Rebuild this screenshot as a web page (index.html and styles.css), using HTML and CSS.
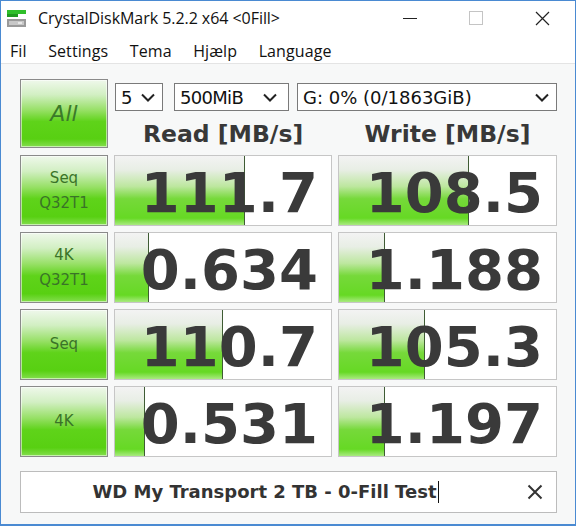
FILE: index.html
```html
<!DOCTYPE html>
<html lang="da">
<head>
<meta charset="utf-8">
<title>CrystalDiskMark</title>
<link rel="stylesheet" href="styles.css">
</head>
<body>
<div class="window">
  <div class="titlebar">
    <svg class="app-icon" width="22" height="22" viewBox="0 0 22 22">
      <rect x="1" y="2" width="19" height="4" fill="#2fbf2a"/>
      <rect x="1" y="6" width="11" height="3" fill="#1f9a1f"/>
      <rect x="1" y="11" width="19" height="8" fill="#9a9a9a"/>
      <rect x="3" y="13" width="15" height="4" fill="#c8c8c8"/>
      <rect x="12" y="14" width="4" height="2" fill="#e8e8e8"/>
    </svg>
    <span class="title">CrystalDiskMark 5.2.2 x64 &lt;0Fill&gt;</span>
    <div class="controls">
      <span class="ctrl"><svg width="14" height="14" viewBox="0 0 14 14"><line x1="0" y1="7.5" x2="14" y2="7.5" stroke="#222" stroke-width="1"/></svg></span>
      <span class="ctrl"><svg width="14" height="14" viewBox="0 0 14 14"><rect x="0.5" y="0.5" width="13" height="13" fill="none" stroke="#c4c4c4" stroke-width="1"/></svg></span>
      <span class="ctrl"><svg width="15" height="15" viewBox="0 0 15 15"><path d="M1 1L14 14M14 1L1 14" stroke="#222" stroke-width="1.2" fill="none"/></svg></span>
    </div>
  </div>
  <div class="menubar">
    <span class="menu-item">Fil</span>
    <span class="menu-item">Settings</span>
    <span class="menu-item">Tema</span>
    <span class="menu-item">Hjælp</span>
    <span class="menu-item">Language</span>
  </div>
  <div class="content">
    <div class="grid">
      <div class="btn btn-all">All</div>
      <div class="top-right">
        <div class="toolbar">
          <div class="select sel-count"><span>5</span><svg class="chev" width="14" height="9" viewBox="0 0 14 9"><path d="M1 1.5L7 7.5L13 1.5" fill="none" stroke="#222" stroke-width="2"/></svg></div>
          <div class="select sel-size"><span>500MiB</span><svg class="chev" width="14" height="9" viewBox="0 0 14 9"><path d="M1 1.5L7 7.5L13 1.5" fill="none" stroke="#222" stroke-width="2"/></svg></div>
          <div class="select sel-drive"><span>G: 0% (0/1863GiB)</span><svg class="chev" width="14" height="9" viewBox="0 0 14 9"><path d="M1 1.5L7 7.5L13 1.5" fill="none" stroke="#222" stroke-width="2"/></svg></div>
        </div>
        <div class="heads">
          <div class="head">Read [MB/s]</div>
          <div class="head">Write [MB/s]</div>
        </div>
      </div>

      <div class="btn btn-label"><span>Seq</span><span>Q32T1</span></div>
      <div class="cell"><div class="bar" style="width:130px"></div><span class="val">111.7</span></div>
      <div class="cell"><div class="bar" style="width:130px"></div><span class="val">108.5</span></div>

      <div class="btn btn-label"><span>4K</span><span>Q32T1</span></div>
      <div class="cell"><div class="bar" style="width:34px"></div><span class="val">0.634</span></div>
      <div class="cell"><div class="bar" style="width:46px"></div><span class="val">1.188</span></div>

      <div class="btn btn-label"><span>Seq</span></div>
      <div class="cell"><div class="bar" style="width:108px"></div><span class="val">110.7</span></div>
      <div class="cell"><div class="bar" style="width:86px"></div><span class="val">105.3</span></div>

      <div class="btn btn-label"><span>4K</span></div>
      <div class="cell"><div class="bar" style="width:30px"></div><span class="val">0.531</span></div>
      <div class="cell"><div class="bar" style="width:46px"></div><span class="val">1.197</span></div>
    </div>
    <div class="comment">
      <span class="comment-text">WD My Transport 2 TB - 0-Fill Test<span class="caret"></span></span>
      <svg class="clear" width="16" height="16" viewBox="0 0 16 16"><path d="M1.5 1.5L14.5 14.5M14.5 1.5L1.5 14.5" stroke="#333" stroke-width="2" fill="none"/></svg>
    </div>
  </div>
</div>
</body>
</html>
```
FILE: styles.css
```css
* { box-sizing: border-box; }
html, body { margin: 0; padding: 0; background: #ffffff; }
body { width: 576px; height: 526px; overflow: hidden; }

.window {
  width: 576px;
  height: 526px;
  border: 1px solid #4a8ad2;
  border-bottom-width: 2px;
  background: #f7f8f8;
  display: flex;
  flex-direction: column;
  font-family: "Open Sans", "Noto Sans", sans-serif;
  color: #111;
}

.titlebar {
  height: 32px;
  flex: none;
  background: #ffffff;
  display: flex;
  align-items: center;
  padding-left: 5px;
  padding-top: 2px;
}
.app-icon { margin-right: 10px; margin-top: 1px; }
.title { font-size: 16px; color: #111; letter-spacing: -0.05px; }
.controls { margin-left: auto; display: flex; align-items: center; height: 100%; }
.ctrl {
  width: 66px;
  height: 100%;
  display: flex;
  align-items: center;
  justify-content: center;
}

.menubar {
  height: 31px;
  flex: none;
  background: #ffffff;
  border-bottom: 1px solid #e4e4e4;
  display: flex;
  align-items: center;
  padding-left: 9px;
  padding-top: 6px;
}
.menu-item { font-size: 16px; color: #111; margin-right: 21.5px; letter-spacing: 0.1px; }

.content {
  padding: 15px 18px 0 19px;
  flex: 1;
}

.grid {
  display: grid;
  grid-template-columns: 88px 218px 219px;
  grid-template-rows: 70px repeat(4, 71px);
  column-gap: 6px;
  row-gap: 6px;
}

.btn {
  border: 1px solid #8a8a8a;
  box-shadow: inset 0 0 0 1px rgba(255,255,255,0.55);
  background: linear-gradient(#eff8eb 0%, #d2efc3 22%, #97e066 45%, #5fd31a 62%, #58d012 88%, #84de4e 100%);
  color: #3a7328;
  display: flex;
  flex-direction: column;
  align-items: center;
  justify-content: center;
}
.btn-all {
  height: 69px;
  font-family: "DejaVu Sans", sans-serif;
  font-size: 22px;
  font-style: italic;
  font-weight: normal;
  color: #3b7a2a;
}
.btn-label {
  font-family: "DejaVu Sans", sans-serif;
  font-size: 15px;
  line-height: 25px;
}

.top-right {
  grid-column: 2 / 4;
  display: flex;
  flex-direction: column;
}
.toolbar {
  display: flex;
  margin-top: 4px;
  height: 28px;
}
.select {
  height: 28px;
  border: 1px solid #7a7a7a;
  background: #ffffff;
  display: flex;
  align-items: center;
  justify-content: space-between;
  padding: 0 7px 0 5px;
  font-family: "DejaVu Sans", sans-serif;
  font-size: 18px;
  color: #111;
}
.sel-count { width: 48px; margin-left: 1px; }
.sel-size { width: 115px; margin-left: 11px; padding-right: 11px; letter-spacing: -0.7px; }
.sel-drive { width: 260px; margin-left: 8px; }
.chev { flex: none; }

.heads {
  flex: 1;
  display: grid;
  grid-template-columns: 218px 219px;
  column-gap: 6px;
  align-items: center;
}
.head {
  text-align: center;
  font-family: "DejaVu Sans", sans-serif;
  font-weight: bold;
  font-size: 23.5px;
  color: #383838;
  padding-top: 8px;
}

.cell {
  position: relative;
  background: #ffffff;
  border: 1px solid #c6c6c6;
  display: flex;
  align-items: center;
  justify-content: flex-end;
  padding-right: 13px;
  overflow: hidden;
}
.bar {
  position: absolute;
  left: 0;
  top: 0;
  bottom: 0;
  background: linear-gradient(#f3f3f3 0%, #e8eee5 20%, #bde79f 44%, #76d93a 62%, #66d924 90%, #a9ea80 100%);
  border-right: 1px solid #3f5c34;
}
.val {
  position: relative;
  font-family: "DejaVu Sans", sans-serif;
  font-weight: bold;
  font-size: 56px;
  line-height: 1;
  color: #3a3a3a;
  margin-top: 5px;
}

.comment {
  margin-top: 14px;
  width: 537px;
  height: 42px;
  background: #ffffff;
  border: 1px solid #bcbcbc;
  display: flex;
  align-items: center;
  position: relative;
}
.comment-text {
  flex: 1;
  text-align: center;
  padding-right: 46px;
  font-family: "DejaVu Sans", sans-serif;
  font-weight: bold;
  font-size: 18px;
  color: #333;
}
.caret {
  display: inline-block;
  width: 1px;
  height: 22px;
  background: #111;
  vertical-align: -5px;
  margin-left: 1px;
}
.clear { position: absolute; right: 13px; top: 12px; }
```
